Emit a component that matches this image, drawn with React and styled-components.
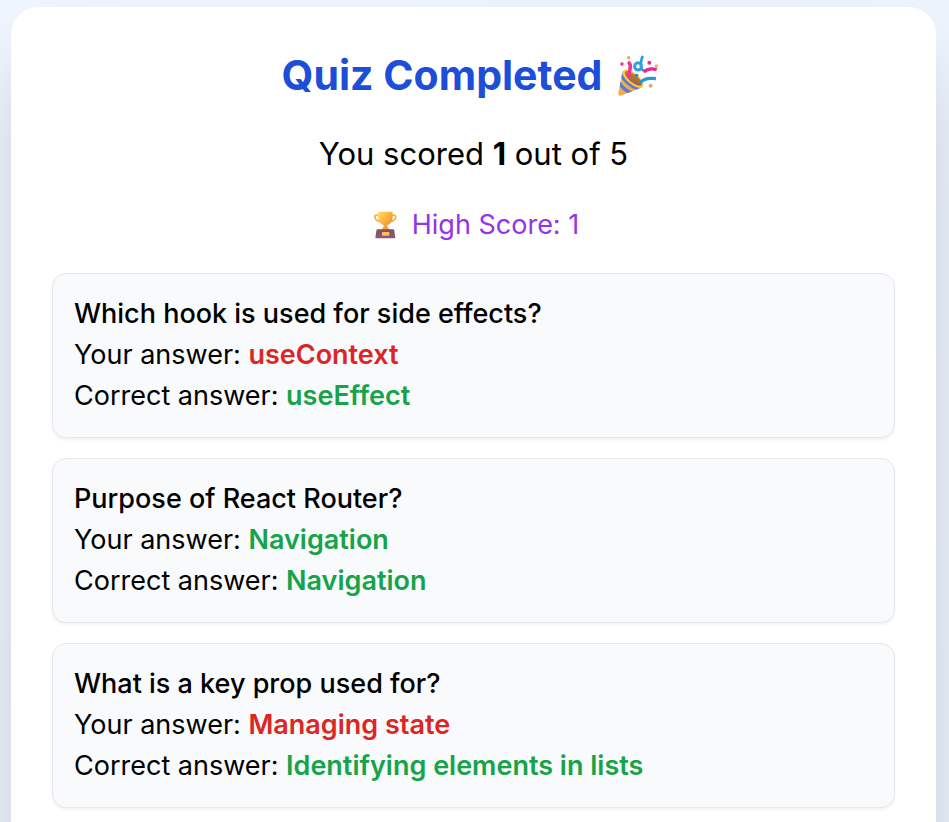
import React from "react";
import styled, { createGlobalStyle } from "styled-components";

const GlobalStyle = createGlobalStyle`
  *, *::before, *::after { box-sizing: border-box; }
  body {
    margin: 0;
    font-family: Inter, "Liberation Sans", sans-serif;
    color: #000;
  }
  h1, h2, p, ul { margin: 0; padding: 0; }
`;

const Page = styled.div`
  height: 100vh;
  overflow: hidden;
  padding: 7px 13px 0 11px;
  background: linear-gradient(to bottom right, #eff6ff, #eaf3fd);
`;

const Card = styled.main`
  display: flex;
  flex-direction: column;
  gap: 27px;
  min-height: 150vh;
  padding: 41px;
  border-radius: 27px;
  background: #fff;
  box-shadow: 0 43px 86px -21px rgba(0, 0, 0, 0.25);
`;

const Title = styled.h1`
  display: flex;
  justify-content: center;
  align-items: center;
  gap: 15px;
  padding-right: 6px;
  font-size: 41px;
  line-height: 55px;
  font-weight: 700;
  color: #1d4ed8;
`;

const Score = styled.p`
  text-align: center;
  font-size: 31px;
  line-height: 48px;
`;

const HighScore = styled.p`
  display: flex;
  justify-content: center;
  align-items: center;
  gap: 14px;
  padding: 0 0 2px 4px;
  font-size: 27px;
  line-height: 39px;
  color: #9333ea;
`;

const Results = styled.ul`
  display: flex;
  flex-direction: column;
  gap: 20px;
  list-style: none;
`;

const ResultItem = styled.li`
  padding: 19px 21px 21px;
  border: 1px solid #e5e7eb;
  border-radius: 14px;
  background: #f9fafb;
  box-shadow: 0 2px 3px rgba(0, 0, 0, 0.05);
  font-size: 27px;
  line-height: 41px;
`;

const Question = styled.h2`
  font-size: 27px;
  line-height: 41px;
  font-weight: 500;
`;

const Answer = styled.span`
  font-weight: 600;
  color: ${({ $correct }) => ($correct ? "#16a34a" : "#dc2626")};
`;

const PartyIcon = styled.svg`
  width: 42px;
  height: 42px;
  flex: none;
`;

const TrophyIcon = styled.svg`
  width: 26px;
  height: 28px;
  flex: none;
`;

function PartyPopper() {
  return (
    <PartyIcon viewBox="36 30 126 126" role="img" aria-label="Party popper">
      <defs>
        <linearGradient id="cone" x1="0" y1="0" x2="1" y2="1">
          <stop offset="0" stopColor="#ffc83d" />
          <stop offset="1" stopColor="#ee8f48" />
        </linearGradient>
        <linearGradient id="inside" x1="0" y1="0" x2="1" y2="1">
          <stop offset="0" stopColor="#d08a3a" />
          <stop offset="1" stopColor="#935a36" />
        </linearGradient>
        <clipPath id="coneShape">
          <path d="M53 78 L40 145 Q39 153 47 152 L114 126 Q116 108 96 90 Q70 70 53 78Z" />
        </clipPath>
      </defs>
      <g clipPath="url(#coneShape)">
        <path d="M30 65H125V160H30Z" fill="url(#cone)" />
        <path d="M48 86 Q63 119 103 132" fill="none" stroke="#547bd9" strokeWidth="11" />
        <path d="M43 112 Q54 135 80 144" fill="none" stroke="#547bd9" strokeWidth="10" />
      </g>
      <ellipse cx="84" cy="101" rx="38" ry="17" transform="rotate(39 84 101)" fill="#ffc94a" />
      <ellipse cx="85" cy="100" rx="32" ry="12" transform="rotate(39 85 100)" fill="url(#inside)" />
      <path d="M69 51 Q80 58 74 76 Q70 87 73 96" fill="none" stroke="#f5319d" strokeWidth="11" />
      <path d="M112 36 Q109 43 108 53 Q108 71 113 75" fill="none" stroke="#279bd7" strokeWidth="8" strokeLinecap="round" />
      <ellipse cx="99" cy="64" rx="10" ry="11" fill="none" stroke="#329fdc" strokeWidth="9" />
      <path d="M116 81 Q131 67 155 74" fill="none" stroke="#ee238f" strokeWidth="10" />
      <path d="M105 114 Q119 96 153 101" fill="none" stroke="#2799d6" strokeWidth="10" />
      <circle cx="95" cy="91" r="5" fill="#218bc7" />
      <circle cx="71" cy="38" r="5" fill="#e7ad45" />
      <circle cx="51" cy="57" r="5" fill="#e62b91" />
      <circle cx="133" cy="53" r="6" fill="#ed2d97" />
      <circle cx="154" cy="63" r="5" fill="#e9b257" />
      <circle cx="137" cy="122" r="6" fill="#e6aa58" />
    </PartyIcon>
  );
}

function Trophy() {
  return (
    <TrophyIcon viewBox="35 31 78 84" role="img" aria-label="Trophy">
      <defs>
        <linearGradient id="cup" x1="0" y1="0" x2="1" y2="1">
          <stop offset="0" stopColor="#ffe071" />
          <stop offset="0.4" stopColor="#fdb840" />
          <stop offset="1" stopColor="#e67f34" />
        </linearGradient>
        <linearGradient id="base" x1="0" y1="0" x2="0" y2="1">
          <stop offset="0" stopColor="#80505f" />
          <stop offset="1" stopColor="#955573" />
        </linearGradient>
      </defs>
      <path d="M57 43 H51 Q42 43 44 51 Q47 61 62 63 M92 43 H98 Q108 43 106 51 Q103 61 88 63" fill="none" stroke="#f4ad3c" strokeWidth="5" />
      <path d="M53 33 H97 V50 Q96 67 81 74 L82 80 Q85 85 90 88 H60 Q67 85 69 80 L70 74 Q54 67 53 50Z" fill="url(#cup)" />
      <path d="M52 86 H98 Q101 86 102 90 L105 113 H45 L48 90 Q49 86 52 86Z" fill="url(#base)" />
      <rect x="65" y="94" width="22" height="11" rx="2" fill="#ffc15a" />
    </TrophyIcon>
  );
}

const results = [
  { question: "Which hook is used for side effects?", given: "useContext", correct: "useEffect" },
  { question: "Purpose of React Router?", given: "Navigation", correct: "Navigation" },
  { question: "What is a key prop used for?", given: "Managing state", correct: "Identifying elements in lists" },
];

export default function App() {
  return (
    <Page>
      <GlobalStyle />
      <Card>
        <Title>
          Quiz Completed <PartyPopper />
        </Title>
        <Score>
          You scored <strong>1</strong> out of 5
        </Score>
        <HighScore>
          <Trophy /> High Score: 1
        </HighScore>
        <Results>
          {results.map(({ question, given, correct }) => (
            <ResultItem key={question}>
              <Question>{question}</Question>
              <p>
                Your answer: <Answer $correct={given === correct}>{given}</Answer>
              </p>
              <p>
                Correct answer: <Answer $correct>{correct}</Answer>
              </p>
            </ResultItem>
          ))}
        </Results>
      </Card>
    </Page>
  );
}
